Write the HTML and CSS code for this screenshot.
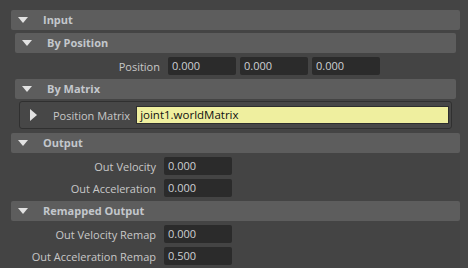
FILE: index.html
```html
<!DOCTYPE html>
<html>
<head>
<meta charset="utf-8">
<link rel="stylesheet" href="styles.css">
</head>
<body>
<div class="page">
  <div class="panel">
    <div class="section">
      <div class="header"><span class="tri-down"></span><span class="htext">Input</span></div>
      <div class="body inset">
        <div class="section">
          <div class="header"><span class="tri-down"></span><span class="htext">By Position</span></div>
          <div class="body">
            <div class="row pos">
              <span class="label">Position</span>
              <span class="field">0.000</span>
              <span class="field">0.000</span>
              <span class="field">0.000</span>
            </div>
          </div>
        </div>
        <div class="section">
          <div class="header"><span class="tri-down"></span><span class="htext">By Matrix</span></div>
          <div class="body">
            <div class="frame">
              <span class="tri-right"></span>
              <span class="mlabel">Position Matrix</span>
              <span class="yfield">joint1.worldMatrix</span>
            </div>
          </div>
        </div>
      </div>
    </div>
    <div class="section">
      <div class="header"><span class="tri-down"></span><span class="htext">Output</span></div>
      <div class="body">
        <div class="row"><span class="label">Out Velocity</span><span class="field">0.000</span></div>
        <div class="row"><span class="label">Out Acceleration</span><span class="field">0.000</span></div>
      </div>
    </div>
    <div class="section">
      <div class="header"><span class="tri-down"></span><span class="htext">Remapped Output</span></div>
      <div class="body">
        <div class="row"><span class="label">Out Velocity Remap</span><span class="field">0.000</span></div>
        <div class="row"><span class="label">Out Acceleration Remap</span><span class="field">0.500</span></div>
      </div>
    </div>
  </div>
  <div class="scroll"></div>
</div>
</body>
</html>
```
FILE: styles.css
```css
html, body {
  margin: 0;
  padding: 0;
  background: #444444;
}
body {
  font-family: "Open Sans", "Noto Sans", sans-serif;
  font-size: 11px;
  color: #c8c8c8;
  width: 468px;
  height: 268px;
  overflow: hidden;
}
.page {
  display: flex;
  height: 268px;
}
.panel {
  width: 449px;
  margin-left: 11px;
  padding-top: 10px;
  display: flex;
  flex-direction: column;
  gap: 4px;
}
.scroll {
  flex: 1;
  background: #464646;
}
.section {
  display: flex;
  flex-direction: column;
}
.header {
  height: 20px;
  background: #5d5d5d;
  border-radius: 2px;
  display: flex;
  align-items: center;
  box-sizing: border-box;
}
.htext {
  font-weight: 700;
  color: #c3c7cc;
  line-height: 20px;
}
.tri-down {
  width: 0;
  height: 0;
  border-left: 5.5px solid transparent;
  border-right: 5.5px solid transparent;
  border-top: 6px solid #e2e2e2;
  margin-left: 7px;
  margin-right: 15px;
}
.body {
  display: flex;
  flex-direction: column;
  gap: 4px;
  padding-top: 4px;
}
.inset {
  padding: 3px 4px 0 4px;
  gap: 4px;
}
.inset .body {
  gap: 0;
}
.inset .section .body {
  padding-top: 4px;
}
.row {
  display: flex;
  align-items: center;
  height: 18px;
  gap: 8px;
}
.label {
  width: 145px;
  text-align: right;
  color: #c8c8c8;
}
.row.pos {
  gap: 4px;
}
.row.pos .label {
  margin-right: 4px;
}
.field {
  width: 68px;
  height: 18px;
  box-sizing: border-box;
  background: #2b2b2b;
  border-radius: 2px;
  padding-left: 4px;
  line-height: 18px;
  color: #cdd0d4;
}
.frame {
  margin: -2px 4px 0 4px;
  height: 28px;
  box-sizing: border-box;
  border: 1px solid #303030;
  border-radius: 3px;
  background: #474747;
  display: flex;
  align-items: center;
}
.tri-right {
  width: 0;
  height: 0;
  border-top: 6.5px solid transparent;
  border-bottom: 6.5px solid transparent;
  border-left: 7px solid #e2e2e2;
  margin-left: 10px;
  margin-right: 16px;
}
.mlabel {
  color: #c8c8c8;
  margin-right: 6px;
}
.yfield {
  flex: 1;
  height: 18px;
  box-sizing: border-box;
  background: #efef9f;
  border: 1px solid #2e2e2e;
  margin-right: 2px;
  color: #111111;
  padding-left: 3px;
  line-height: 16px;
  font-size: 11.5px;
}
```
